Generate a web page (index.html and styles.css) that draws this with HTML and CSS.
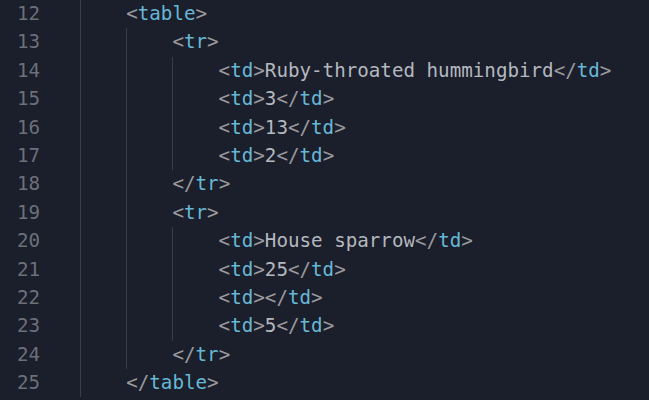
FILE: index.html
```html
<!DOCTYPE html>
<html>
<head>
<meta charset="utf-8">
<link rel="stylesheet" href="styles.css">
</head>
<body>
<div class="editor">
  <div class="gutter">
    <div class="num">12</div>
    <div class="num">13</div>
    <div class="num">14</div>
    <div class="num">15</div>
    <div class="num">16</div>
    <div class="num">17</div>
    <div class="num">18</div>
    <div class="num">19</div>
    <div class="num">20</div>
    <div class="num">21</div>
    <div class="num">22</div>
    <div class="num">23</div>
    <div class="num">24</div>
    <div class="num">25</div>
  </div>
  <div class="code">
    <div class="blk">
      <div class="ln"><span class="p">&lt;</span><span class="t">table</span><span class="p">&gt;</span></div>
      <div class="blk">
        <div class="ln"><span class="p">&lt;</span><span class="t">tr</span><span class="p">&gt;</span></div>
        <div class="blk">
          <div class="ln"><span class="p">&lt;</span><span class="t">td</span><span class="p">&gt;</span>Ruby-throated hummingbird<span class="p">&lt;/</span><span class="t">td</span><span class="p">&gt;</span></div>
          <div class="ln"><span class="p">&lt;</span><span class="t">td</span><span class="p">&gt;</span>3<span class="p">&lt;/</span><span class="t">td</span><span class="p">&gt;</span></div>
          <div class="ln"><span class="p">&lt;</span><span class="t">td</span><span class="p">&gt;</span>13<span class="p">&lt;/</span><span class="t">td</span><span class="p">&gt;</span></div>
          <div class="ln"><span class="p">&lt;</span><span class="t">td</span><span class="p">&gt;</span>2<span class="p">&lt;/</span><span class="t">td</span><span class="p">&gt;</span></div>
        </div>
        <div class="ln"><span class="p">&lt;/</span><span class="t">tr</span><span class="p">&gt;</span></div>
        <div class="ln"><span class="p">&lt;</span><span class="t">tr</span><span class="p">&gt;</span></div>
        <div class="blk">
          <div class="ln"><span class="p">&lt;</span><span class="t">td</span><span class="p">&gt;</span>House sparrow<span class="p">&lt;/</span><span class="t">td</span><span class="p">&gt;</span></div>
          <div class="ln"><span class="p">&lt;</span><span class="t">td</span><span class="p">&gt;</span>25<span class="p">&lt;/</span><span class="t">td</span><span class="p">&gt;</span></div>
          <div class="ln"><span class="p">&lt;</span><span class="t">td</span><span class="p">&gt;&lt;/</span><span class="t">td</span><span class="p">&gt;</span></div>
          <div class="ln"><span class="p">&lt;</span><span class="t">td</span><span class="p">&gt;</span>5<span class="p">&lt;/</span><span class="t">td</span><span class="p">&gt;</span></div>
        </div>
        <div class="ln"><span class="p">&lt;/</span><span class="t">tr</span><span class="p">&gt;</span></div>
      </div>
      <div class="ln"><span class="p">&lt;/</span><span class="t">table</span><span class="p">&gt;</span></div>
    </div>
  </div>
</div>
</body>
</html>
```

FILE: styles.css
```css
html, body {
  margin: 0;
  padding: 0;
  background: #1b1e2b;
  height: 100%;
  overflow: hidden;
}

.editor {
  display: flex;
  font-family: "DejaVu Sans Mono", "Liberation Mono", monospace;
  font-size: 19.2px;
  line-height: 28.4px;
  color: #b4b8bf;
}

.gutter {
  width: 40px;
  padding-right: 40px;
  text-align: right;
  color: #6c707a;
}

.num {
  height: 28.4px;
}

.code {
  flex: 1;
}

.blk {
  border-left: 1px solid #3b3e47;
  padding-left: calc(4ch - 1px);
}

.ln {
  white-space: pre;
  height: 28.4px;
}

.p {
  color: #9a9a9e;
}

.t {
  color: #67b8d6;
}
```
